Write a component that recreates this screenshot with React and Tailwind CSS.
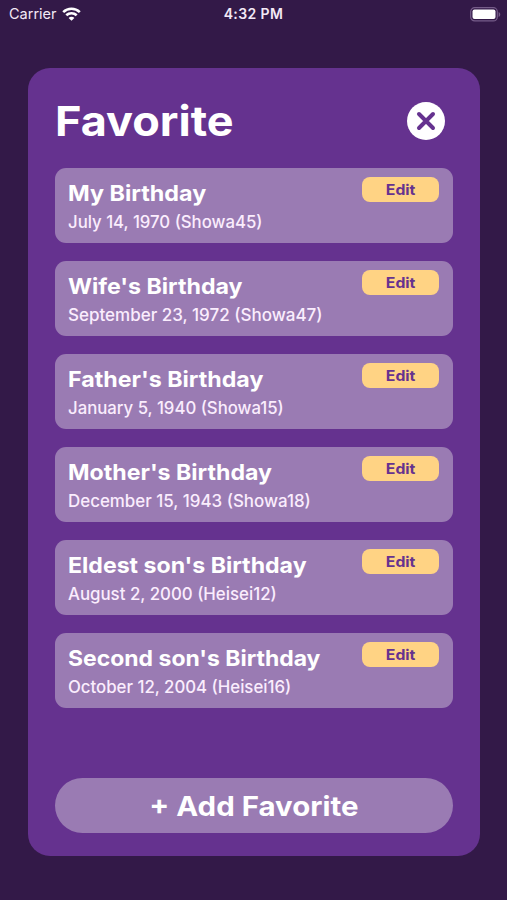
const favorites = [
  { title: "My Birthday", date: "July 14, 1970 (Showa45)", titleWidth: "scale-x-[1.06]", dateWidth: "scale-x-[0.985]" },
  { title: "Wife's Birthday", date: "September 23, 1972 (Showa47)", titleWidth: "scale-x-[1.053]", dateWidth: "scale-x-[1.000]" },
  { title: "Father's Birthday", date: "January 5, 1940 (Showa15)", titleWidth: "scale-x-[1.055]", dateWidth: "scale-x-[0.985]" },
  { title: "Mother's Birthday", date: "December 15, 1943 (Showa18)", titleWidth: "scale-x-[1.052]", dateWidth: "scale-x-[0.995]" },
  { title: "Eldest son's Birthday", date: "August 2, 2000 (Heisei12)", titleWidth: "scale-x-[1.051]", dateWidth: "scale-x-[0.990]" },
  { title: "Second son's Birthday", date: "October 12, 2004 (Heisei16)", titleWidth: "scale-x-[1.044]", dateWidth: "scale-x-[0.987]" },
];

function StatusBar() {
  return (
    <div className="grid h-7 grid-cols-3 items-center pl-[9px] pr-[6px] text-[#f3e9f6]">
      <div className="flex items-center gap-[5px]">
        <span className="text-[14.5px] leading-none">Carrier</span>
        <svg className="mb-px" width="19" height="14" viewBox="0 0 19 14" fill="none" stroke="#fff" strokeWidth="2.6">
          <path d="M1.2 5.1C5.9.6 13.1.6 17.8 5.1" />
          <path d="M4.3 8.3c2.9-2.8 7.5-2.8 10.4 0" />
          <path d="M9.5 13.8 6.6 10.9c1.6-1.5 4.2-1.5 5.8 0Z" fill="#fff" stroke="none" />
        </svg>
      </div>
      <div className="pr-[3px] text-center text-[14px] font-semibold leading-none tracking-[0.4px]">4:32 PM</div>
      <svg className="justify-self-end" width="31" height="15" viewBox="0 0 31 15">
        <rect x="0.7" y="0.7" width="26.6" height="13.2" rx="4" fill="none" stroke="#765c89" strokeWidth="1.2" />
        <rect x="2.5" y="2.6" width="23" height="9.4" rx="2" fill="#fff" />
        <path d="M28.6 5v5c2.2-.7 2.2-4.3 0-5Z" fill="#765c89" />
      </svg>
    </div>
  );
}

function FavoriteCard({ title, date, titleWidth, dateWidth }) {
  return (
    <li className="flex h-[75px] justify-between rounded-[11px] bg-[#9a7bb3] pl-[13px] pr-[14px]">
      <div className="whitespace-nowrap pt-[11px]">
        <h2 className={`w-fit origin-left text-[22px] font-bold leading-[28px] ${titleWidth}`}>{title}</h2>
        <p className={`mt-[4px] w-fit origin-left text-[17px] font-[450] leading-[22px] text-[#faedfd] ${dateWidth}`}>{date}</p>
      </div>
      <button className="mt-[9px] h-[25px] w-[77px] rounded-[8px] bg-[#ffd384] text-[14.5px] font-bold leading-[25px] text-[#66328f]">
        <span className="inline-block scale-x-[1.09]">Edit</span>
      </button>
    </li>
  );
}

export default function App() {
  return (
    <div className="flex h-[900px] w-[507px] flex-col overflow-hidden bg-[#331948] font-['Inter',sans-serif] text-white">
      <StatusBar />
      <main className="ml-[28px] mt-[39.5px] flex h-[788px] w-[452px] flex-col rounded-[22px] bg-[#65328f] px-[27px] pb-[22.5px]">
        <header className="flex h-[100.5px] items-center justify-between pr-[8px] pt-[6px]">
          <h1 className="origin-left scale-x-[1.085] pt-[2px] text-[41.5px] font-bold leading-none">Favorite</h1>
          <button aria-label="Close">
            <svg width="38" height="38" viewBox="0 0 38 38">
              <circle cx="19" cy="19" r="19" fill="#fff" />
              <path d="m12 12 14 14M26 12 12 26" stroke="#65328f" strokeWidth="4" strokeLinecap="round" />
            </svg>
          </button>
        </header>
        <ul className="flex flex-col gap-[18px]">
          {favorites.map((favorite) => (
            <FavoriteCard key={favorite.title} {...favorite} />
          ))}
        </ul>
        <button className="mt-auto h-[55px] rounded-[27.5px] bg-[#9a7bb3] pt-px text-[27px] font-bold leading-[55px]">
          <span className="inline-block scale-x-[1.09]">+ Add Favorite</span>
        </button>
      </main>
    </div>
  );
}
